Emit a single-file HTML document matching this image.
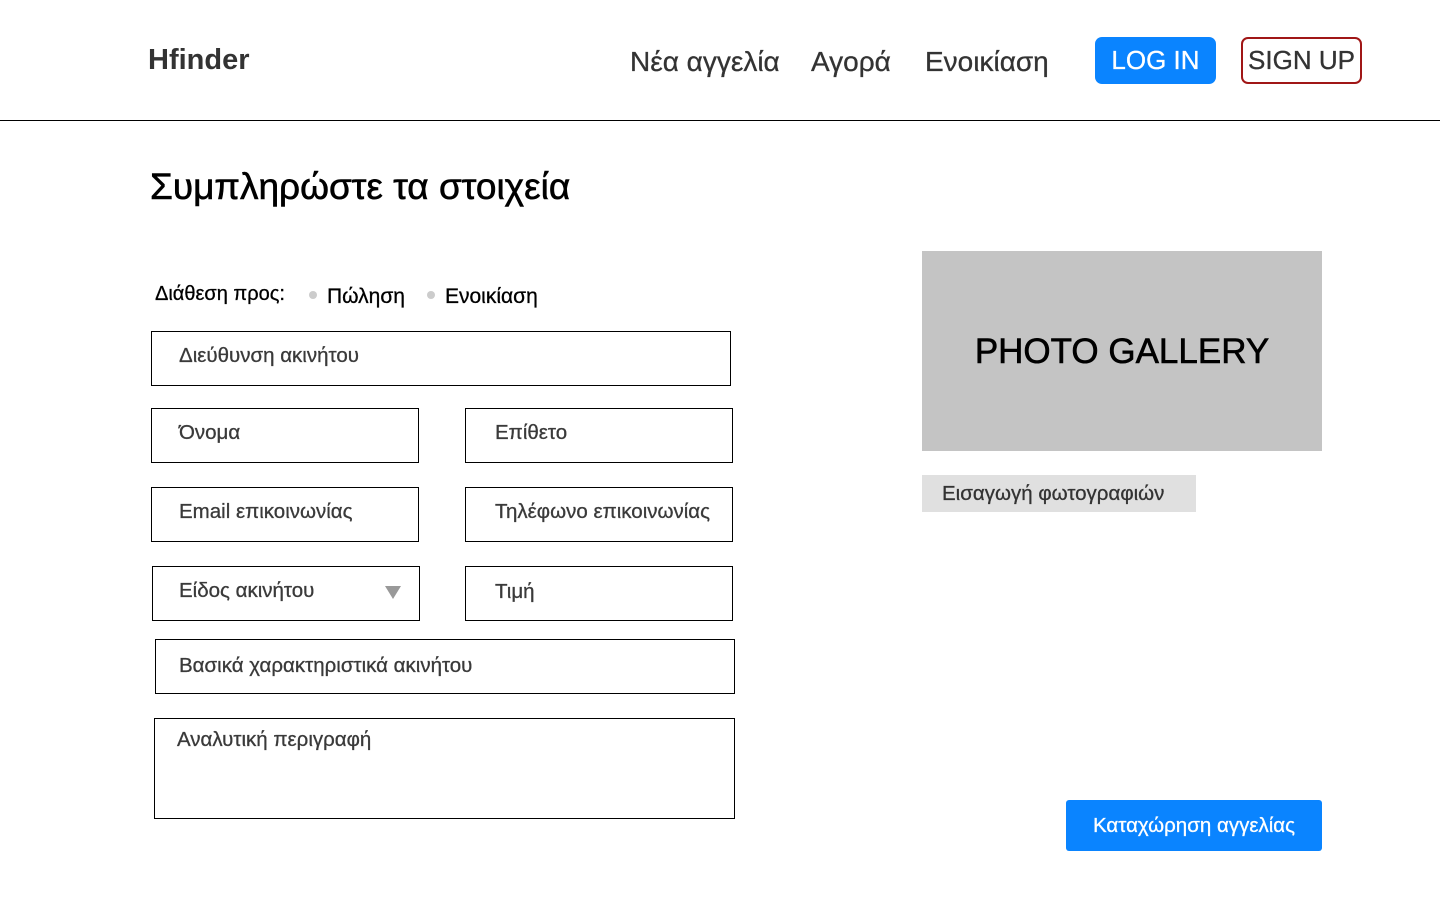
<!DOCTYPE html>
<html><head><meta charset="utf-8"><style>
body{margin:0;width:1440px;height:900px;background:#fff;position:relative;font-family:"Liberation Sans",sans-serif;overflow:hidden}
.a{position:absolute}
.f{position:absolute;border:1px solid #000;box-sizing:border-box;color:#3a3a3a;font-size:20.5px;padding-left:27px;line-height:1;-webkit-text-stroke:0.3px #3a3a3a}
.nav{font-size:28px;color:#333;top:46px;-webkit-text-stroke:0.3px #333}
</style></head><body>
<div class="a" style="left:148px;top:44px;font-size:29px;font-weight:bold;color:#333">Hfinder</div>
<div class="a nav" style="left:630px">Νέα αγγελία</div>
<div class="a nav" style="left:811px">Αγορά</div>
<div class="a nav" style="left:925px">Ενοικίαση</div>
<div class="a" style="left:1095px;top:37px;width:121px;height:47px;background:#0a84ff;border-radius:7px;color:#fff;font-size:26px;line-height:47px;text-align:center;-webkit-text-stroke:0.3px #fff">LOG IN</div>
<div class="a" style="left:1241px;top:37px;width:121px;height:47px;border:2px solid #a01616;box-sizing:border-box;border-radius:7px;color:#333;font-size:26px;line-height:43px;text-align:center;-webkit-text-stroke:0.3px #333">SIGN UP</div>
<div class="a" style="left:0;top:120px;width:1440px;height:1px;background:#000"></div>
<div class="a" style="left:150px;top:166px;font-size:37px;color:#000;-webkit-text-stroke:0.6px #000">Συμπληρώστε τα στοιχεία</div>
<div class="a" style="left:155px;top:283px;font-size:20px;color:#000;-webkit-text-stroke:0.3px #000">Διάθεση προς:</div>
<div class="a" style="left:309px;top:291px;width:8px;height:8px;border-radius:50%;background:#ccc"></div>
<div class="a" style="left:327px;top:285px;font-size:21px;color:#000;-webkit-text-stroke:0.3px #000">Πώληση</div>
<div class="a" style="left:427px;top:291px;width:8px;height:8px;border-radius:50%;background:#ccc"></div>
<div class="a" style="left:445px;top:285px;font-size:21px;color:#000;-webkit-text-stroke:0.3px #000">Ενοικίαση</div>
<div class="f" style="left:151px;top:331px;width:580px;height:55px;padding-top:14px">Διεύθυνση ακινήτου</div>
<div class="f" style="left:151px;top:408px;width:268px;height:55px;padding-top:14px">Όνομα</div>
<div class="f" style="left:465px;top:408px;width:268px;height:55px;padding-top:14px;padding-left:29px">Επίθετο</div>
<div class="f" style="left:151px;top:487px;width:268px;height:55px;padding-top:14px">Email επικοινωνίας</div>
<div class="f" style="left:465px;top:487px;width:268px;height:55px;padding-top:14px;padding-left:29px">Τηλέφωνο επικοινωνίας</div>
<div class="f" style="left:152px;top:566px;width:268px;height:55px;padding-top:14px;padding-left:26px">Είδος ακινήτου<span class="a" style="left:232px;top:19px;width:0;height:0;border-left:8px solid transparent;border-right:8px solid transparent;border-top:13px solid #999;-webkit-text-stroke:0"></span></div>
<div class="f" style="left:465px;top:566px;width:268px;height:55px;padding-top:15px;padding-left:29px">Τιμή</div>
<div class="f" style="left:155px;top:639px;width:580px;height:55px;padding-top:16px;padding-left:23px">Βασικά χαρακτηριστικά ακινήτου</div>
<div class="f" style="left:154px;top:718px;width:581px;height:101px;padding-top:11px;padding-left:22px">Αναλυτική περιγραφή</div>
<div class="a" style="left:922px;top:251px;width:400px;height:200px;background:#c4c4c4;color:#000;font-size:35px;text-align:center;line-height:202px;-webkit-text-stroke:0.6px #000">PHOTO GALLERY</div>
<div class="a" style="left:922px;top:475px;width:274px;height:37px;background:#e0e0e0;color:#333;font-size:20.5px;line-height:37px;padding-left:20px;box-sizing:border-box;white-space:nowrap;-webkit-text-stroke:0.3px #333">Εισαγωγή φωτογραφιών</div>
<div class="a" style="left:1066px;top:800px;width:256px;height:51px;background:#0a84ff;border-radius:3px;color:#fff;font-size:20.5px;line-height:51px;text-align:center;-webkit-text-stroke:0.3px #fff">Καταχώρηση αγγελίας</div>
</body></html>
